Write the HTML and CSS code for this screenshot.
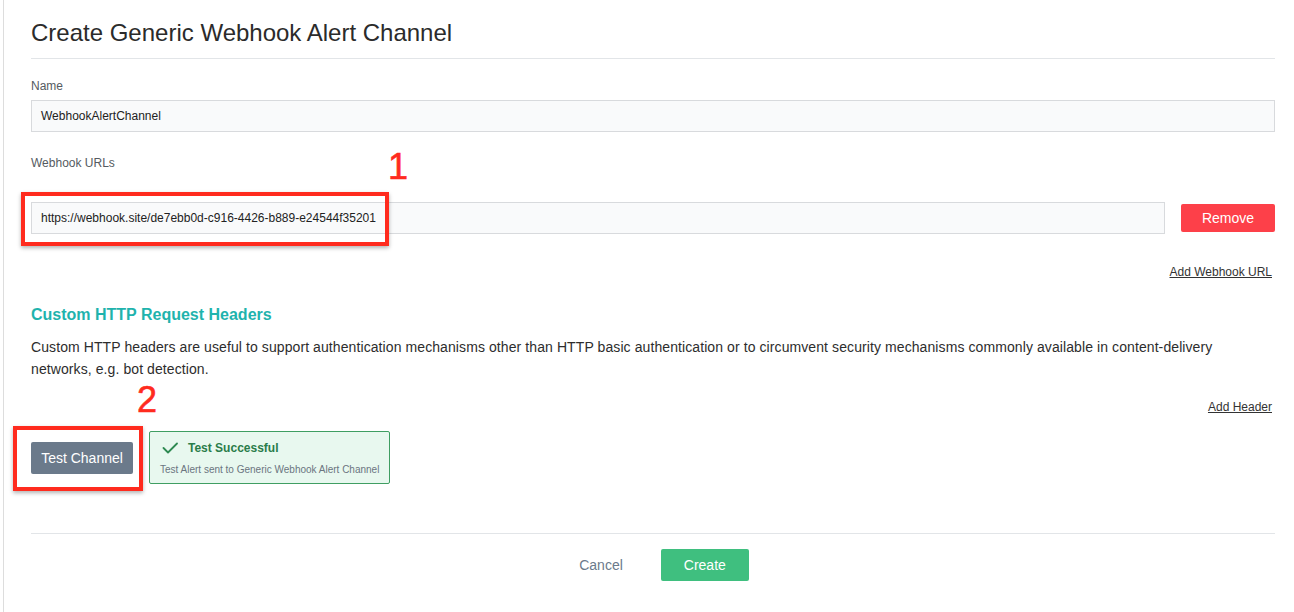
FILE: index.html
```html
<!DOCTYPE html>
<html lang="en">
<head>
<meta charset="utf-8">
<title>Create Generic Webhook Alert Channel</title>
<link rel="stylesheet" href="styles.css">
</head>
<body>
<div class="page">
  <h1 class="title">Create Generic Webhook Alert Channel</h1>
  <div class="divider"></div>

  <div class="field-label label-name">Name</div>
  <div class="input">WebhookAlertChannel</div>

  <div class="field-label label-urls">Webhook URLs</div>
  <div class="url-row">
    <div class="input input-url">https://webhook.site/de7ebb0d-c916-4426-b889-e24544f35201</div>
    <button class="btn btn-remove">Remove</button>
  </div>
  <div class="link-row link-webhook"><a class="link">Add Webhook URL</a></div>

  <h2 class="section-title">Custom HTTP Request Headers</h2>
  <p class="section-text">Custom HTTP headers are useful to support authentication mechanisms other than HTTP basic authentication or to circumvent security mechanisms commonly available in content-delivery networks, e.g. bot detection.</p>
  <div class="link-row link-header"><a class="link">Add Header</a></div>

  <div class="test-row">
    <button class="btn btn-test">Test Channel</button>
    <div class="success">
      <div class="success-head">
        <svg class="check" width="16" height="12" viewBox="0 0 16 12"><polyline points="1.5,6 6,10.5 15,1.5" fill="none" stroke="#2f8a52" stroke-width="1.8" stroke-linecap="round" stroke-linejoin="round"/></svg>
        <span class="success-title">Test Successful</span>
      </div>
      <div class="success-sub">Test Alert sent to Generic Webhook Alert Channel</div>
    </div>
  </div>

  <div class="divider divider-footer"></div>
  <div class="footer">
    <button class="btn btn-cancel">Cancel</button>
    <button class="btn btn-create">Create</button>
  </div>

  <div class="mark mark-box mark-box-1"></div>
  <div class="mark mark-num mark-num-1">1</div>
  <div class="mark mark-box mark-box-2"></div>
  <div class="mark mark-num mark-num-2">2</div>
</div>
</body>
</html>
```

FILE: styles.css
```css
html, body {
  margin: 0;
  padding: 0;
  background: #ffffff;
}

body {
  font-family: "Liberation Sans", Arial, sans-serif;
  color: #2d2d2d;
}

.page {
  position: relative;
  box-sizing: border-box;
  min-height: 612px;
  margin-left: 3px;
  border-left: 1px solid #dddddd;
  padding: 18px 19px 20px 27px;
}

.title {
  margin: 0;
  font-size: 24px;
  line-height: 29px;
  font-weight: 400;
  color: #2b2b2b;
}

.divider {
  height: 1px;
  background: #e2e5e8;
  margin-top: 11px;
}

.field-label {
  font-size: 12px;
  line-height: 14px;
  color: #555b61;
}

.label-name {
  margin-top: 20px;
}

.label-urls {
  margin-top: 24px;
}

.input {
  box-sizing: border-box;
  height: 32px;
  margin-top: 7px;
  padding: 0 9px;
  display: flex;
  align-items: center;
  border: 1px solid #d8dadd;
  background: #f9fafb;
  font-size: 12px;
  color: #222222;
}

.url-row {
  margin-top: 32px;
  display: flex;
  align-items: center;
  gap: 16px;
}

.input-url {
  flex: 1;
  margin-top: 0;
}

.btn {
  font-family: "Liberation Sans", Arial, sans-serif;
  font-size: 14px;
  border: none;
  border-radius: 2px;
  cursor: pointer;
  padding: 0;
}

.btn-remove {
  width: 94px;
  height: 28px;
  background: #fd4049;
  color: #ffffff;
}

.link-row {
  text-align: right;
  padding-right: 3px;
  font-size: 12px;
  line-height: 14px;
}

.link {
  color: #333333;
  text-decoration: underline;
}

.link-webhook {
  margin-top: 31px;
}

.section-title {
  margin: 26px 0 0;
  font-size: 16px;
  line-height: 19px;
  font-weight: 700;
  color: #1fb3ad;
}

.section-text {
  margin: 12px 0 0;
  font-size: 14px;
  line-height: 22px;
  letter-spacing: 0.09px;
  color: #2d2d2d;
}

.link-header {
  margin-top: 20px;
}

.test-row {
  margin-top: 17px;
  display: flex;
  align-items: center;
  gap: 16px;
}

.btn-test {
  width: 102px;
  height: 32px;
  background: #6b7a8b;
  color: #ffffff;
}

.success {
  box-sizing: border-box;
  padding: 9px 10px 7px;
  border: 1px solid #3f9e62;
  border-radius: 2px;
  background: #e8f8ef;
}

.success-head {
  display: flex;
  align-items: center;
  height: 14px;
}

.check {
  margin-left: 2px;
  margin-right: 10px;
  margin-top: -1px;
}

.success-title {
  font-size: 12px;
  line-height: 14px;
  font-weight: 700;
  color: #2a7d4a;
}

.success-sub {
  margin-top: 9px;
  font-size: 10px;
  line-height: 12px;
  color: #6b7580;
}

.divider-footer {
  margin-top: 49px;
}

.footer {
  margin-top: 15px;
  display: flex;
  justify-content: center;
  gap: 16px;
}

.btn-cancel {
  height: 32px;
  padding: 0 22px;
  background: transparent;
  color: #6b7a8b;
}

.btn-create {
  width: 88px;
  height: 32px;
  background: #3fbf7f;
  color: #ffffff;
}

/* annotation overlays */
.mark {
  position: absolute;
}

.mark-box {
  box-sizing: border-box;
  border: 4px solid #ff2b1e;
  box-shadow: 0 2px 4px rgba(0, 0, 0, 0.3);
}

.mark-box-1 {
  left: 17px;
  top: 192px;
  width: 368px;
  height: 54px;
}

.mark-box-2 {
  left: 9px;
  top: 426px;
  width: 130px;
  height: 65px;
}

.mark-num {
  font-family: "Liberation Sans", Arial, sans-serif;
  font-size: 36px;
  line-height: 36px;
  color: #ff2b1e;
  -webkit-text-stroke: 0.6px #ff2b1e;
}

.mark-num-1 {
  left: 384px;
  top: 149px;
}

.mark-num-2 {
  left: 133px;
  top: 382px;
}
```
